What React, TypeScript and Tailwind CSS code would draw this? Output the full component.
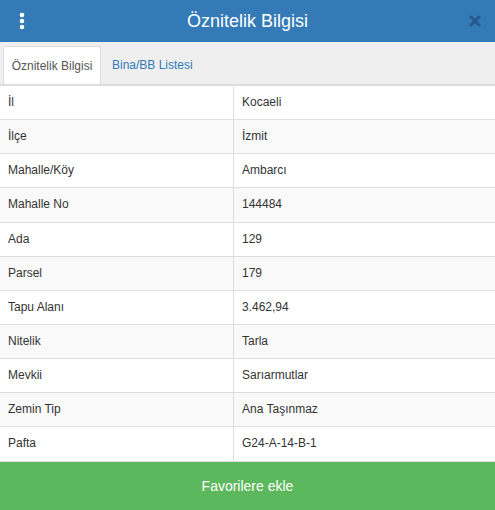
import React from "react";

const rows: [string, string][] = [
  ["İl", "Kocaeli"],
  ["İlçe", "İzmit"],
  ["Mahalle/Köy", "Ambarcı"],
  ["Mahalle No", "144484"],
  ["Ada", "129"],
  ["Parsel", "179"],
  ["Tapu Alanı", "3.462,94"],
  ["Nitelik", "Tarla"],
  ["Mevkii", "Sarıarmutlar"],
  ["Zemin Tip", "Ana Taşınmaz"],
  ["Pafta", "G24-A-14-B-1"],
];

function Kebab() {
  return (
    <svg width="8" height="18" viewBox="0 0 8 18" className="block">
      <circle cx="4" cy="3" r="2.3" fill="#fff" />
      <circle cx="4" cy="9" r="2.3" fill="#fff" />
      <circle cx="4" cy="15" r="2.3" fill="#fff" />
    </svg>
  );
}

function CloseIcon() {
  return (
    <svg width="12" height="12" viewBox="0 0 12 12" className="block">
      <path d="M2 2 L10 10 M10 2 L2 10" stroke="#24598a" strokeWidth="3" strokeLinecap="round" />
    </svg>
  );
}

export default function App() {
  return (
    <div
      className="w-[495px] h-[510px] flex flex-col bg-white text-[#333] overflow-hidden"
      style={{ fontFamily: '"Liberation Sans", Arial, sans-serif' }}
    >
      <header className="h-[42px] shrink-0 bg-[#337ab7] flex items-center justify-between pl-[18px] pr-[14px]">
        <Kebab />
        <h1 className="text-white text-[18px] leading-none">Öznitelik Bilgisi</h1>
        <CloseIcon />
      </header>

      <div className="shrink-0 bg-[#efefef] pt-[4px] pl-[3px] flex border-b border-[#ddd]">
        <div className="h-[38px] w-[98px] bg-white border border-b-0 border-[#ddd] rounded-t-[3px] flex items-center justify-center text-[12px] text-[#555]">
          Öznitelik Bilgisi
        </div>
        <div className="h-[38px] px-[11px] flex items-center text-[12px] text-[#337ab7]">
          Bina/BB Listesi
        </div>
      </div>

      <div className="flex-1 flex flex-col border-t border-[#ddd]">
        {rows.map(([k, v], i) => (
          <div
            key={k}
            className={`grid grid-cols-[234px_1fr] text-[12px] leading-[17.14px] border-b border-[#ddd] ${
              i % 2 === 1 ? "bg-[#f9f9f9]" : "bg-white"
            }`}
          >
            <div className="py-[8px] pl-[8px] border-r border-[#ddd]">{k}</div>
            <div className="py-[8px] pl-[8px]">{v}</div>
          </div>
        ))}
      </div>

      <button className="h-[48px] shrink-0 bg-[#5cb85c] text-white text-[14px] w-full">
        Favorilere ekle
      </button>
    </div>
  );
}
